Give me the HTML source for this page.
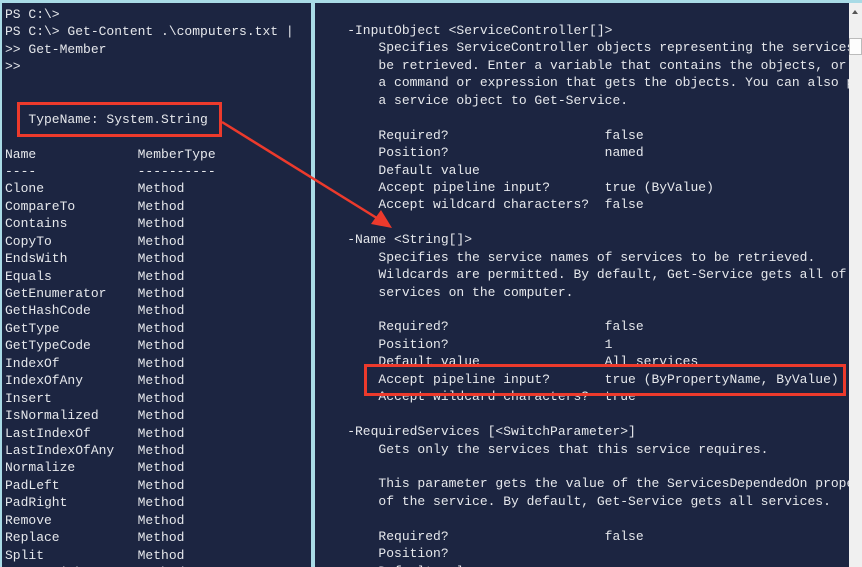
<!DOCTYPE html>
<html><head><meta charset="utf-8"><style>
html,body{margin:0;padding:0;width:862px;height:567px;overflow:hidden;}
body{position:relative;background:#a9dbe6;}
.pane{position:absolute;background:#1c2541;overflow:hidden;}
pre{margin:0;position:absolute;font-family:"Liberation Mono",monospace;font-size:13px;line-height:17.43px;color:#e6e8ec;white-space:pre;}
</style></head><body>
<div class="pane" style="left:2px;top:3px;width:309px;height:564px;">
<pre style="left:3px;top:3px;">PS C:\>
PS C:\> Get-Content .\computers.txt |
>> Get-Member
>>


   TypeName: System.String

Name             MemberType
----             ----------
Clone            Method
CompareTo        Method
Contains         Method
CopyTo           Method
EndsWith         Method
Equals           Method
GetEnumerator    Method
GetHashCode      Method
GetType          Method
GetTypeCode      Method
IndexOf          Method
IndexOfAny       Method
Insert           Method
IsNormalized     Method
LastIndexOf      Method
LastIndexOfAny   Method
Normalize        Method
PadLeft          Method
PadRight         Method
Remove           Method
Replace          Method
Split            Method
StartsWith       Method</pre>
</div>
<div class="pane" style="left:315px;top:3px;width:534px;height:564px;">
<pre style="left:1px;top:19px;">    -InputObject &lt;ServiceController[]&gt;
        Specifies ServiceController objects representing the services to
        be retrieved. Enter a variable that contains the objects, or type
        a command or expression that gets the objects. You can also pipe
        a service object to Get-Service.

        Required?                    false
        Position?                    named
        Default value
        Accept pipeline input?       true (ByValue)
        Accept wildcard characters?  false

    -Name &lt;String[]&gt;
        Specifies the service names of services to be retrieved.
        Wildcards are permitted. By default, Get-Service gets all of the
        services on the computer.

        Required?                    false
        Position?                    1
        Default value                All services
        Accept pipeline input?       true (ByPropertyName, ByValue)
        Accept wildcard characters?  true

    -RequiredServices [&lt;SwitchParameter&gt;]
        Gets only the services that this service requires.

        This parameter gets the value of the ServicesDependedOn property
        of the service. By default, Get-Service gets all services.

        Required?                    false
        Position?
        Default value</pre>
</div>
<div style="position:absolute;left:849px;top:3px;width:13px;height:564px;background:#f0f0f0;"></div>
<div style="position:absolute;left:852px;top:10px;width:0;height:0;border-left:3px solid transparent;border-right:3px solid transparent;border-bottom:4px solid #555;"></div>
<div style="position:absolute;left:849px;top:38px;width:13px;height:17px;background:#fdfdfd;border:1px solid #bbb;box-sizing:border-box;"></div>
<div style="position:absolute;left:17px;top:102px;width:205px;height:35px;border:3px solid #ec3a2c;box-sizing:border-box;"></div>
<div style="position:absolute;left:364px;top:364px;width:482px;height:32px;border:3px solid #ec3a2c;box-sizing:border-box;"></div>
<svg style="position:absolute;left:0;top:0;" width="862" height="567">
<line x1="222" y1="122" x2="380" y2="220" stroke="#ec3a2c" stroke-width="2.5"/>
<polygon points="392,228 371,224 381,210" fill="#ec3a2c"/>
</svg>
</body></html>
